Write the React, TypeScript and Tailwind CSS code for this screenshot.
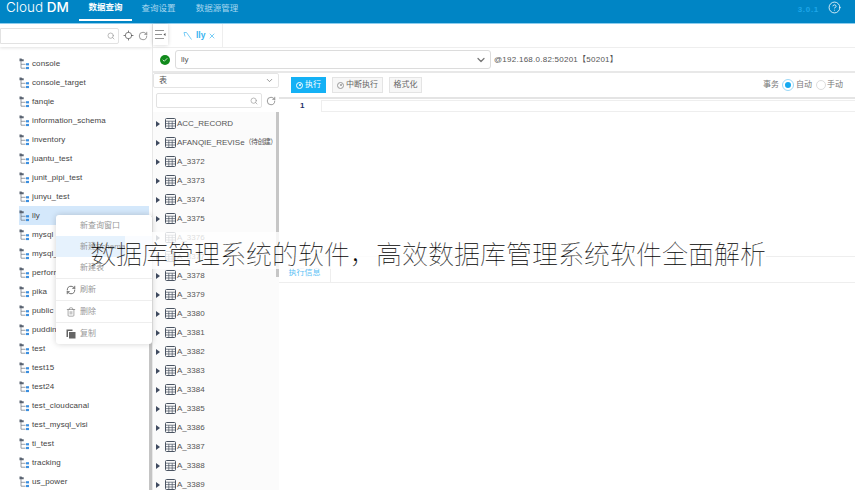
import { Search, Locate, RotateCw, ChevronDown, RefreshCw, Trash2, CircleHelp, X, Check } from 'lucide-react'

const FONT = "font-['Liberation_Sans','Noto_Sans_CJK_SC',sans-serif]"

const SCHEMAS = [
  'console', 'console_target', 'fanqie', 'information_schema', 'inventory', 'juantu_test', 'junit_pipi_test', 'junyu_test',
  'lly', 'mysql', 'mysql_test', 'performance_schema', 'pika', 'public', 'pudding', 'test', 'test15', 'test24',
  'test_cloudcanal', 'test_mysql_visi', 'ti_test', 'tracking', 'us_power',
]

const TABLES = [
  'ACC_RECORD', 'AFANQIE_REVISe', 'A_3372', 'A_3373', 'A_3374', 'A_3375', 'A_3376', 'A_3377', 'A_3378', 'A_3379',
  'A_3380', 'A_3381', 'A_3382', 'A_3383', 'A_3384', 'A_3385', 'A_3386', 'A_3387', 'A_3388', 'A_3389',
]

function SchemaIcon() {
  return (
    <svg width="13" height="12" viewBox="0 0 13 12" className="shrink-0">
      <path d="M0.5 0.5h2l.6.8h1.6v1.9H.5z" fill="#5b6472" />
      <path d="M2 3v7.2h4.5M2 6.3h4.5" fill="none" stroke="#6b7280" strokeWidth="0.7" />
      <rect x="7" y="5.2" width="3" height="2.2" fill="#3b8fe0" />
      <rect x="7" y="8.9" width="3" height="2.2" fill="#3b8fe0" />
    </svg>
  )
}

function TableIcon() {
  return (
    <svg width="11" height="11" viewBox="0 0 11 11" className="shrink-0">
      <rect x="0.5" y="0.5" width="10" height="10" rx="1" fill="none" stroke="#4b5563" />
      <path d="M0.5 3.2h10M0.5 5.6h10M0.5 8h10M3.8 3.2v7.3M7.2 3.2v7.3" fill="none" stroke="#4b5563" strokeWidth="0.7" />
    </svg>
  )
}

function Header() {
  return (
    <header className="h-[24px] shrink-0 bg-[#0085c5] border-b border-[#8ccdee] flex items-start text-white">
      <div className="w-[79px] pl-[6px] text-[13.5px] leading-[15px] font-['Inter',sans-serif] font-light whitespace-nowrap">
        Cloud <span className="font-medium">DM</span>
      </div>
      <div className="w-[53px] h-[21px] pb-[4px] flex items-center justify-center text-[8.5px] font-bold border-b-2 border-white">数据查询</div>
      <div className="w-[63px] h-[21px] pb-[4px] pr-[10px] flex items-center justify-center text-[8.5px] text-[#a6d6ef]">查询设置</div>
      <div className="w-[44px] h-[21px] pb-[4px] flex items-center justify-center text-[8.5px] text-[#a6d6ef] whitespace-nowrap">数据源管理</div>
      <div className="flex-1" />
      <div className="text-[8px] font-bold tracking-[0.7px] text-[#1ea6e8] leading-[19px] mr-[9px]">3.0.1</div>
      <CircleHelp size={13} strokeWidth={1.5} className="mr-[14px] mt-[1px]" />
    </header>
  )
}

function Sidebar() {
  return (
    <aside className="relative w-[152px] shrink-0 flex flex-col overflow-hidden">
      <div className="h-[23px] shrink-0 flex items-center shadow-[0_1px_3px_rgba(0,0,0,0.12)]">
        <div className="w-[119px] h-[16px] bg-white border border-[#e2e2e2] rounded-r-[2px] flex items-center justify-end pr-[1px]">
          <Search size={8} className="text-[#999] mr-[2px]" />
        </div>
        <Locate size={11} strokeWidth={1.6} className="ml-[4px] text-[#555]" />
        <RotateCw size={10} strokeWidth={1.4} className="ml-[4px] text-[#555]" />
      </div>
      <ul className="pt-[7px] pr-[3px]">
        {SCHEMAS.map(s => (
          <li key={s} className={`h-[19px] ml-[19px] flex items-center text-[8px] leading-none text-[#444] tracking-[0.1px] ${s === 'lly' ? 'bg-[#d4e8fb]' : ''}`}>
            <SchemaIcon />
            <span>{s}</span>
          </li>
        ))}
      </ul>
      <div className="absolute right-0 top-[192px] bottom-0 w-[3px] bg-[#c4c4c4]" />
    </aside>
  )
}

function ContextMenu() {
  const rowCls = 'flex items-center text-[8px] text-[#999]'
  return (
    <div className="absolute left-[56px] top-[215px] w-[96px] h-[129px] bg-white rounded-[3px] shadow-[0_0_6px_rgba(0,0,0,0.18)] flex flex-col">
      <div className={`${rowCls} h-[21px] pl-[24px]`}>新查询窗口</div>
      <div className={`${rowCls} h-[21px] pl-[24px] bg-[#e6f2fd] text-[#5aa9ef]`}>新建Schema</div>
      <div className={`${rowCls} h-[22px] pl-[24px] border-b border-[#eee]`}>新建表</div>
      <div className={`${rowCls} h-[22px] pl-[10px] gap-[4px] border-b border-[#eee]`}><RefreshCw size={10} strokeWidth={2} className="text-[#555]" />刷新</div>
      <div className={`${rowCls} h-[22px] pl-[10px] gap-[4px] border-b border-[#eee]`}><Trash2 size={10} strokeWidth={1.5} className="text-[#777]" />删除</div>
      <div className={`${rowCls} h-[21px] pl-[10px] gap-[4px]`}>
        <svg width="10" height="10" viewBox="0 0 10 10">
          <path d="M0.5 0.5h6v1.5h-4.5v6h-1.5z" fill="#666" />
          <rect x="3" y="3" width="6.5" height="6.5" fill="#666" />
        </svg>
        复制
      </div>
    </div>
  )
}

function TablePanel() {
  return (
    <div className="w-[126px] shrink-0 flex flex-col overflow-hidden">
      <div className="h-[15px] shrink-0 flex items-center justify-between border border-[#e4e4e4] rounded-[2px] pl-[5px] pr-[4px] text-[8px] text-[#555]">
        <span>表</span>
        <ChevronDown size={9} className="text-[#777]" />
      </div>
      <div className="h-[24px] shrink-0 flex items-center pl-[3px] pt-[1px]">
        <div className="w-[106px] h-[15px] border border-[#e2e2e2] rounded-[2px] flex items-center justify-end pr-[3px]">
          <Search size={8} className="text-[#999]" />
        </div>
        <RotateCw size={10} strokeWidth={1.4} className="ml-[4px] text-[#555]" />
      </div>
      <div className="flex flex-1 overflow-hidden bg-[#fbfbfb]">
        <ul className="flex-1 pt-[2px] min-w-0">
          {TABLES.map(t => (
            <li key={t} className="h-[19px] flex items-center text-[8px] text-[#555] whitespace-nowrap">
              <svg width="4" height="6" viewBox="0 0 4 6" className="ml-[3px] mr-[5px] shrink-0"><path d="M0 0l4 3-4 3z" fill="#3f4a5f" /></svg>
              <TableIcon />
              <span className="ml-[1px]">{t}</span>
              {t === 'AFANQIE_REVISe' && <span className="text-[7px] tracking-[-0.6px]">（待创建）</span>}
            </li>
          ))}
        </ul>
        <div className="w-[3px] shrink-0 self-start h-[165px] bg-[#c6c6c6]" />
      </div>
    </div>
  )
}

function Editor() {
  return (
    <div className="flex-1 min-w-0 flex flex-col">
      <div className="h-[26px] shrink-0 flex items-center pl-[12px] border-b-2 border-[#e4e4e4] text-[8px]">
        <button className="w-[35px] h-[16px] bg-[#14b1f5] text-white flex items-center justify-center gap-[2px]">
          <span className="w-[7px] h-[7px] rounded-full border border-white flex items-center justify-center"><span className="w-[2px] h-[2px] rounded-full bg-white" /></span>
          执行
        </button>
        <button className="ml-[6px] w-[51px] h-[16px] bg-[#f7f7f7] border border-[#e4e4e4] text-[#666] flex items-center justify-center gap-[2px]">
          <span className="w-[7px] h-[7px] rounded-full border border-[#999] flex items-center justify-center"><span className="w-[2px] h-[2px] rounded-full bg-[#999]" /></span>
          中断执行
        </button>
        <button className="ml-[6px] w-[33px] h-[16px] bg-[#f7f7f7] border border-[#e4e4e4] text-[#666]">格式化</button>
        <div className="flex-1" />
        <span className="text-[#777]">事务</span>
        <span className="ml-[4px] w-[10px] h-[10px] rounded-full bg-[#14a9f0] border-[2px] border-white outline outline-[#9bd8f7]" />
        <span className="ml-[3px] text-[#777]">自动</span>
        <span className="ml-[4px] w-[10px] h-[10px] rounded-full border border-[#ddd]" />
        <span className="ml-[1px] mr-[12px] text-[#777]">手动</span>
      </div>
      <div className="h-[158px] shrink-0 flex pt-px border-b border-[#eee]">
        <div className="w-[42px] pl-[21px] text-[8px] font-bold text-[#1f2f6b] leading-[12px]">1</div>
        <div className="flex-1 h-[12px] border-y border-l border-[#eee]" />
      </div>
      <div className="h-[26px] shrink-0 flex border-b border-[#eee]">
        <div className="w-[51px] text-center text-[8px] text-[#5cc1f5] pt-[10px]">执行信息</div>
        <div className="flex-1 border-l border-[#eee]" />
      </div>
    </div>
  )
}

export default function App() {
  return (
    <div className={`relative w-[855px] h-[490px] overflow-hidden bg-white flex flex-col ${FONT}`}>
      <Header />
      <div className="flex flex-1 min-h-0">
        <Sidebar />
        <main className="flex-1 min-w-0 flex flex-col border-l border-[#e8e8e8]">
          <div className="h-[24px] shrink-0 flex items-stretch border-b border-[#eee]">
            <div className="w-[15px] h-[21px] flex items-center justify-center shadow-[0_0_4px_rgba(0,0,0,0.18)]">
              <svg width="11" height="9" viewBox="0 0 11 9">
                <path d="M0 0.5h9M0 4.5h7M0 8.5h9" stroke="#777" strokeWidth="0.8" fill="none" />
                <path d="M10.5 3l-2 1.5 2 1.5z" fill="#555" />
              </svg>
            </div>
            <div className="ml-[2px] w-[53px] flex items-center pl-[13px] text-[8.5px] font-bold text-[#36b4f0] border-r border-[#eee]">
              <svg width="10" height="10" viewBox="0 0 10 10" className="shrink-0 mr-[3px]"><path d="M1 1.5h2.5l5 7M1 1.5l1 4" fill="none" stroke="#58bff2" strokeWidth="0.8" /></svg>
              lly
              <X size={8} strokeWidth={2} className="ml-[3px]" />
            </div>
          </div>
          <div className="h-[25px] shrink-0 flex items-center pl-[7px] border-b-2 border-[#e8e8e8]">
            <span className="w-[10px] h-[10px] rounded-full bg-[#118a1c] flex items-center justify-center">
              <Check size={6} strokeWidth={3} className="text-white" />
            </span>
            <div className="ml-[5px] w-[316px] h-[19px] border border-[#dcdcdc] rounded-[3px] flex items-center justify-between pl-[5px] pr-[3px] text-[8px] text-[#555]">
              <span>lly</span>
              <ChevronDown size={12} strokeWidth={2.5} className="text-[#777]" />
            </div>
            <span className="ml-[3px] text-[8px] text-[#555] tracking-[0.25px]">@192.168.0.82:50201【50201】</span>
          </div>
          <div className="flex flex-1 min-h-0">
            <TablePanel />
            <Editor />
          </div>
        </main>
      </div>
      <ContextMenu />
      <div className="absolute left-[125px] w-[641px] top-[232px] h-[37px] bg-white/80" />
      <div className="absolute left-[90px] top-[240px] font-['Noto_Sans_CJK_SC',sans-serif] font-thin text-[26px] text-black leading-[26px] whitespace-nowrap [-webkit-text-stroke:0.12px_#fff]">
        数据库管理系统的软件，高效数据库管理系统软件全面解析
      </div>
    </div>
  )
}
